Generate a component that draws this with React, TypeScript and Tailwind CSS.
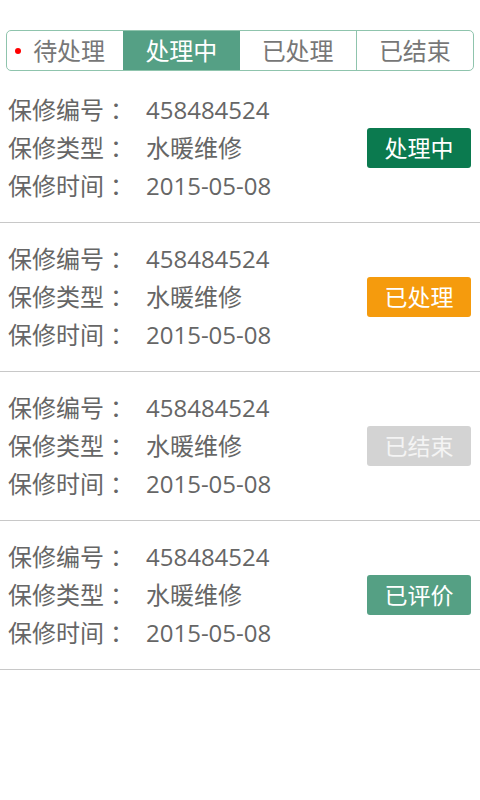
import React from 'react'

const TABS = ['待处理', '处理中', '已处理', '已结束']

const ORDERS = [
  { id: '458484524', type: '水暖维修', date: '2015-05-08', status: '处理中', color: 'bg-[#0b7a4f] text-white' },
  { id: '458484524', type: '水暖维修', date: '2015-05-08', status: '已处理', color: 'bg-[#f59b0d] text-white' },
  { id: '458484524', type: '水暖维修', date: '2015-05-08', status: '已结束', color: 'bg-[#d3d3d3] text-[#f4f4f4]' },
  { id: '458484524', type: '水暖维修', date: '2015-05-08', status: '已评价', color: 'bg-[#55a084] text-white' },
]

const font = { fontFamily: '"Open Sans", "Noto Sans CJK SC", sans-serif' }

function Label({ text }: { text: string }) {
  return (
    <span className="w-[138px] flex">
      {text}
      <span style={{ fontFamily: '"Noto Sans CJK JP", sans-serif' }}>：</span>
    </span>
  )
}

export default function App() {
  return (
    <div className="w-[480px] h-[800px] bg-white" style={font}>
      <div className="px-[6px] pt-[30px] pb-[3px]">
        <div className="flex h-[41px] rounded-[5px] border border-[#8fc4ad] overflow-hidden">
          {TABS.map((t, i) => {
            const active = i === 1
            return (
              <div
                key={t}
                className={`relative flex-1 flex items-center justify-center text-[24px] ${
                  active ? 'bg-[#55a085] text-white' : 'text-[#777]'
                } ${i === 3 ? 'border-l border-[#8fc4ad]' : ''}`}
              >
                {i === 0 && (
                  <span className="absolute left-[8px] top-1/2 -translate-y-1/2 w-[6px] h-[6px] rounded-full bg-[#f00]" />
                )}
                <span className={i === 0 ? 'pl-[8px]' : ''}>{t}</span>
              </div>
            )
          })}
        </div>
      </div>
      <div>
        {ORDERS.map((o, i) => (
          <div key={i} className="flex items-center justify-between pl-[8px] pr-[9px] pt-[17px] pb-[17px] border-b border-[#c8c8c8]">
            <div className="text-[24px] leading-[38px] text-[#666]">
              <div className="flex"><Label text="保修编号" /><span>{o.id}</span></div>
              <div className="flex"><Label text="保修类型" /><span>{o.type}</span></div>
              <div className="flex"><Label text="保修时间" /><span>{o.date}</span></div>
            </div>
            <div className={`w-[104px] h-[40px] rounded-[3px] flex items-center justify-center text-[23px] ${o.color}`}>
              {o.status}
            </div>
          </div>
        ))}
      </div>
    </div>
  )
}
